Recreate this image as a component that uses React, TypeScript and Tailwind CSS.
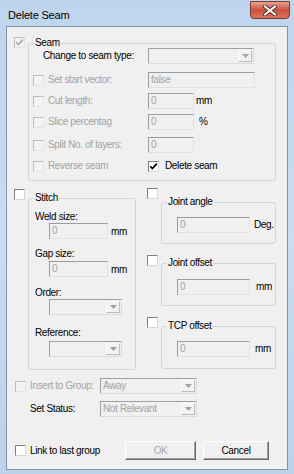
import React from "react";

const TXT = "text-[10px] tracking-[-0.35px] leading-[12px] font-['Liberation_Sans',Arial,sans-serif]";

function Cb({ checked = false, disabled = false }: { checked?: boolean; disabled?: boolean }) {
  return (
    <div
      className={`w-[11px] h-[11px] shrink-0 border flex items-center justify-center ${
        disabled
          ? "border-t-[#bdbdbd] border-l-[#bdbdbd] border-r-[#e4e4e4] border-b-[#e4e4e4] bg-[#f3f3f3]"
          : "border-t-[#808080] border-l-[#808080] border-r-[#d8d8d8] border-b-[#d8d8d8] bg-white"
      }`}
    >
      {checked && (
        <svg width="9" height="9" viewBox="0 0 9 9">
          <path d="M1.2 4.2 L3.4 6.6 L7.8 1.6" stroke={disabled ? "#a9a9a9" : "#000"} strokeWidth="1.7" fill="none" />
        </svg>
      )}
    </div>
  );
}

function Field({ w, value = "0" }: { w: string; value?: string }) {
  return (
    <div
      className={`${w} h-[16px] shrink-0 flex items-center border border-t-[#9c9c9c] border-l-[#9c9c9c] border-r-[#e2e2e2] border-b-[#e2e2e2] bg-[#f0f0f0] pl-[2px] text-[#a3a3a3]`}
    >
      {value}
    </div>
  );
}

function Arrow() {
  return (
    <svg width="7" height="4" viewBox="0 0 7 4">
      <path d="M0 0 H7 L3.5 4 Z" fill="#a0a0a0" />
    </svg>
  );
}

function Combo({ w, text = "" }: { w: string; text?: string }) {
  return (
    <div
      className={`${w} h-[16px] shrink-0 flex items-stretch border border-t-[#a0a0a0] border-l-[#a0a0a0] border-r-[#dcdcdc] border-b-[#dcdcdc] bg-[#f0f0f0]`}
    >
      <span className="flex-1 pl-[2px] flex items-center text-[#a3a3a3] whitespace-nowrap overflow-hidden">{text}</span>
      <div className="w-[14px] m-[1px] flex items-center justify-center border border-t-[#fafafa] border-l-[#fafafa] border-r-[#bcbcbc] border-b-[#bcbcbc] bg-[#f2f2f2]">
        <Arrow />
      </div>
    </div>
  );
}

function Btn({ w, label, disabled = false }: { w: string; label: string; disabled?: boolean }) {
  return (
    <div
      className={`${w} h-[19px] shrink-0 flex items-center justify-center border border-t-[#ffffff] border-l-[#ffffff] border-r-[#6a6a6a] border-b-[#6a6a6a] shadow-[inset_-1px_-1px_0_#a0a0a0] bg-[#f0f0f0] ${
        disabled ? "text-[#a8a8a8]" : "text-black"
      }`}
    >
      {label}
    </div>
  );
}

const GB = "border border-[#d0d7dc] rounded-[3px] shrink-0";
const LEG = "ml-[5px] px-[1px] leading-[10px] font-normal";

export default function App() {
  return (
    <div className={`w-[294px] h-[474px] overflow-hidden flex flex-col bg-gradient-to-b from-[#bfd5ed] via-[#c9dcf0] to-[#bcd2ea] ${TXT}`}>
      {/* title bar */}
      <div className="h-[26px] shrink-0 flex items-start">
        <div className="pl-[8px] pt-[8px] text-[11px] leading-[14px] tracking-[-0.2px] text-black">Delete Seam</div>
        <div className="ml-auto mr-[4px] mt-[1px] w-[40px] h-[18px] rounded-b-[4px] border border-[#7a3a32] bg-gradient-to-b from-[#e8a293] via-[#c9503f] to-[#d9735f] flex items-center justify-center">
          <svg width="14" height="11" viewBox="0 0 14 11">
            <path d="M2 1.5 L12 9.5 M12 1.5 L2 9.5" stroke="#5a2a24" strokeWidth="4" strokeLinecap="round" />
            <path d="M2 1.5 L12 9.5 M12 1.5 L2 9.5" stroke="#ffffff" strokeWidth="2.2" strokeLinecap="round" />
          </svg>
        </div>
      </div>

      {/* client area */}
      <div className="ml-[6px] w-[282px] h-[444px] shrink-0 border border-[#8094ab] bg-[#f0f0f0] flex flex-col text-black">
        {/* Seam */}
        <div className="mt-[10px] pl-[7px] flex items-start">
          <Cb checked disabled />
          <fieldset className={`${GB} ml-[3px] mt-[1px] w-[248px] h-[143px]`}>
            <legend className={LEG}>Seam</legend>
            <div className="flex flex-col">
              <div className="h-[16px] flex items-center">
                <div className="w-[119px] pl-[14px]">Change to seam type:</div>
                <Combo w="w-[106px]" />
              </div>
              <div className="mt-[8px] h-[16px] flex items-center">
                <div className="w-[119px] pl-[4px] flex items-center text-[#a3a3a3]">
                  <Cb disabled />
                  <span className="ml-[4px]">Set start vector:</span>
                </div>
                <Field w="w-[107px]" value="false" />
              </div>
              <div className="mt-[5px] h-[16px] flex items-center">
                <div className="w-[119px] pl-[4px] flex items-center text-[#a3a3a3]">
                  <Cb disabled />
                  <span className="ml-[4px]">Cut length:</span>
                </div>
                <Field w="w-[46px]" />
                <span className="ml-[2px]">mm</span>
              </div>
              <div className="mt-[5px] h-[16px] flex items-center">
                <div className="w-[119px] pl-[4px] flex items-center text-[#a3a3a3]">
                  <Cb disabled />
                  <span className="ml-[4px]">Slice percentag</span>
                </div>
                <Field w="w-[46px]" />
                <span className="ml-[5px]">%</span>
              </div>
              <div className="mt-[7px] h-[16px] flex items-center">
                <div className="w-[119px] pl-[4px] flex items-center text-[#a3a3a3]">
                  <Cb disabled />
                  <span className="ml-[4px]">Split No. of layers:</span>
                </div>
                <Field w="w-[46px]" />
              </div>
              <div className="mt-[7px] h-[12px] flex items-center">
                <div className="w-[119px] pl-[4px] flex items-center text-[#a3a3a3]">
                  <Cb disabled />
                  <span className="ml-[4px]">Reverse seam</span>
                </div>
                <Cb checked />
                <span className="ml-[6px]">Delete seam</span>
              </div>
            </div>
          </fieldset>
        </div>

        {/* lower */}
        <div className="mt-[7px] flex items-start">
          <div className="pl-[7px] flex items-start">
            <div className="mt-[1px]">
              <Cb />
            </div>
            <fieldset className={`${GB} ml-[3px] mt-[5px] w-[108px] h-[177px]`}>
              <legend className={LEG}>Stitch</legend>
              <div className="pl-[6px] flex flex-col">
                <div className="mt-[8px] h-[12px]">Weld size:</div>
                <div className="flex items-center">
                  <div className="ml-[14px]">
                    <Field w="w-[59px]" />
                  </div>
                  <span className="ml-[3px] mt-[2px]">mm</span>
                </div>
                <div className="mt-[9px] h-[12px]">Gap size:</div>
                <div className="mt-[1px] flex items-center">
                  <div className="ml-[14px]">
                    <Field w="w-[59px]" />
                  </div>
                  <span className="ml-[3px] mt-[2px]">mm</span>
                </div>
                <div className="mt-[10px] h-[12px]">Order:</div>
                <div className="ml-[14px]">
                  <Combo w="w-[73px]" />
                </div>
                <div className="mt-[12px] h-[12px]">Reference:</div>
                <div className="mt-[2px] ml-[14px]">
                  <Combo w="w-[73px]" />
                </div>
              </div>
            </fieldset>
          </div>

          <div className="ml-[11px] flex flex-col">
            <div className="flex items-start">
              <Cb />
              <fieldset className={`${GB} ml-[3px] mt-[9px] w-[115px] h-[47px]`}>
                <legend className={LEG}>Joint angle</legend>
                <div className="mt-[10px] ml-[15px] flex items-center">
                  <Field w="w-[73px]" />
                  <span className="ml-[4px]">Deg.</span>
                </div>
              </fieldset>
            </div>
            <div className="mt-[11px] flex items-start">
              <Cb />
              <fieldset className={`${GB} ml-[3px] mt-[3px] w-[115px] h-[48px]`}>
                <legend className={LEG}>Joint offset</legend>
                <div className="mt-[11px] ml-[15px] flex items-center">
                  <Field w="w-[73px]" />
                  <span className="ml-[6px]">mm</span>
                </div>
              </fieldset>
            </div>
            <div className="mt-[11px] flex items-start">
              <Cb />
              <fieldset className={`${GB} ml-[3px] mt-[4px] w-[115px] h-[48px]`}>
                <legend className={LEG}>TCP offset</legend>
                <div className="mt-[10px] ml-[15px] flex items-center">
                  <Field w="w-[73px]" />
                  <span className="ml-[5px]">mm</span>
                </div>
              </fieldset>
            </div>
          </div>
        </div>

        {/* bottom */}
        <div className="mt-[8px] pl-[8px] h-[16px] flex items-center">
          <div className="w-[85px] flex items-center text-[#a3a3a3]">
            <Cb disabled />
            <span className="ml-[4px] whitespace-nowrap">Insert to Group:</span>
          </div>
          <Combo w="w-[97px]" text="Away" />
        </div>
        <div className="mt-[7px] pl-[8px] h-[16px] flex items-center">
          <div className="w-[85px] pl-[15px]">Set Status:</div>
          <Combo w="w-[97px]" text="Not Relevant" />
        </div>
        <div className="mt-[24px] pl-[8px] h-[19px] flex items-center">
          <div className="w-[110px] flex items-center">
            <Cb />
            <span className="ml-[4px] whitespace-nowrap">Link to last group</span>
          </div>
          <Btn w="w-[71px]" label="OK" disabled />
          <div className="ml-[7px]">
            <Btn w="w-[66px]" label="Cancel" />
          </div>
        </div>
      </div>
    </div>
  );
}
